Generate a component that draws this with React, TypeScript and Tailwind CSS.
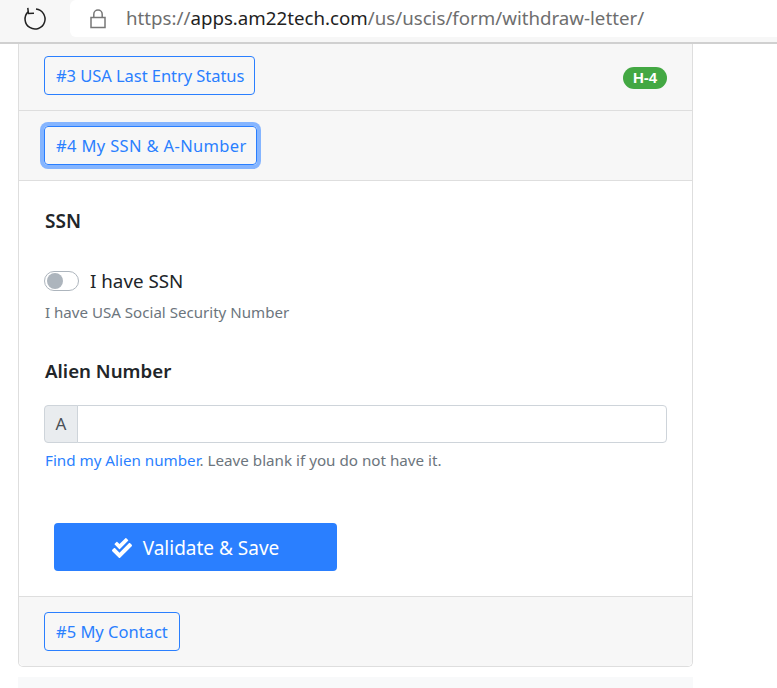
import React from "react";

const font = { fontFamily: '"Noto Sans", "Open Sans", Arial, sans-serif' };

function HeaderButton({ children, className }: { children: React.ReactNode; className: string }) {
  return (
    <button
      className={
        "h-[39px] pl-[11px] pt-[2px] text-left rounded-[4px] border border-[#2a7fff] text-[#2a7fff] text-[16.5px] bg-transparent whitespace-nowrap " +
        className
      }
    >
      {children}
    </button>
  );
}

export default function App() {
  return (
    <div className="w-[777px] h-[688px] overflow-hidden bg-white flex flex-col" style={font}>
      <div className="h-[44px] shrink-0 bg-[#f7f7f7] border-b-2 border-[#d0d0d0] flex items-start">
        <div className="w-[70px] h-[37px] flex items-center justify-center">
          <svg width="26" height="26" viewBox="0 0 26 26" fill="none" stroke="#222" strokeWidth="1.5">
            <path d="M14 3.05 A10 10 0 1 1 6 5.9" />
            <path d="M5.8 1.8 L6.4 7.4 L12 7.2" />
          </svg>
        </div>
        <div className="flex-1 h-[37px] bg-white rounded-l-[6px] flex items-center">
          <svg width="16" height="20" viewBox="0 0 16 20" fill="none" stroke="#777" strokeWidth="1.5" className="ml-[20px]">
            <rect x="1" y="8.5" width="14" height="10" />
            <path d="M3.8 8.5 V5.2 A4.2 4.2 0 0 1 12.2 5.2 V8.5" />
          </svg>
          <div className="ml-[20px] text-[18.7px] text-[#6e6e6e] whitespace-nowrap">
            https://<span className="text-[#222]">apps.am22tech.com</span>/us/uscis/form/withdraw-letter/
          </div>
        </div>
      </div>

      <div className="ml-[18px] w-[675px] shrink-0 border-x border-b border-[#dedede] rounded-b-[5px] bg-white">
        <div className="h-[67px] bg-[#f7f7f7] border-b border-[#dedede] pl-[25px] pr-[25px] pt-[12px] flex items-start justify-between">
          <HeaderButton className="w-[211px] tracking-[-0.05px]">#3 USA Last Entry Status</HeaderButton>
          <span
            className="mt-[11px] h-[22px] w-[44px] rounded-full bg-[#43a843] text-white text-[15px] font-bold flex items-center justify-center"
            style={{ fontFamily: '"Liberation Sans", Arial, sans-serif' }}
          >
            H-4
          </span>
        </div>
        <div className="h-[70px] bg-[#f7f7f7] border-b border-[#dedede] pl-[25px] pt-[15px]">
          <HeaderButton className="w-[213px] tracking-[0.35px] shadow-[0_0_0_4px_#85b5ff]">#4 My SSN &amp; A-Number</HeaderButton>
        </div>

        <div className="h-[416px] border-b border-[#dedede] pl-[25px] pr-[25px] pt-[27px]">
          <div className="ml-[1px] text-[19px] leading-[26px] font-semibold text-[#212529]">SSN</div>
          <div className="mt-[33px] flex items-center h-[28px]">
            <span className="w-[35px] h-[20px] rounded-full border border-[#adb5bd] bg-white flex items-center pl-[2px]">
              <span className="w-[16px] h-[16px] rounded-full bg-[#adb5bd]" />
            </span>
            <span className="ml-[11px] text-[18.8px] text-[#212529]">I have SSN</span>
          </div>
          <div className="ml-[1px] mt-[6px] text-[15.1px] leading-[22px] text-[#6c757d]">I have USA Social Security Number</div>
          <div className="ml-[1px] mt-[35px] text-[18.7px] leading-[26px] font-semibold text-[#212529]">Alien Number</div>
          <div className="mt-[21px] h-[38px] flex">
            <span className="w-[34px] bg-[#e9ecef] border border-[#ced4da] rounded-l-[4px] text-[#495057] text-[17px] flex items-center justify-center">
              A
            </span>
            <input className="flex-1 -ml-px border border-[#ced4da] rounded-r-[4px] bg-white outline-none" />
          </div>
          <div className="ml-[1px] mt-[6px] text-[15.2px] leading-[22px] text-[#6c757d]">
            <span className="text-[#2a7fff]">Find my Alien number</span>. Leave blank if you do not have it.
          </div>
          <button className="mt-[52px] ml-[10px] w-[283px] h-[48px] pt-[2px] rounded-[4px] bg-[#2a7fff] text-white text-[19px] flex items-center justify-center">
            <svg width="20" height="20" viewBox="0 0 512 512" fill="#fff" className="mr-[11px]">
              <path d="M505 174.8l-39.6-39.6c-9.4-9.4-24.6-9.4-33.9 0L192 374.7 80.6 263.2c-9.4-9.4-24.6-9.4-33.9 0L7 302.9c-9.4 9.4-9.4 24.6 0 34L175 505c9.4 9.4 24.6 9.4 33.9 0l296-296.2c9.4-9.5 9.4-24.7.1-34zm-324.3 106c6.2 6.3 16.4 6.3 22.6 0l208-208.2c6.2-6.3 6.2-16.4 0-22.6L366.1 4.7c-6.2-6.3-16.4-6.3-22.6 0L192 156.2l-55.4-55.5c-6.2-6.3-16.4-6.3-22.6 0L68.7 146c-6.2 6.3-6.2 16.4 0 22.6l112 112.2z" />
            </svg>
            Validate &amp; Save
          </button>
        </div>

        <div className="h-[69px] bg-[#f7f7f7] rounded-b-[5px] pl-[25px] pt-[15px]">
          <HeaderButton className="w-[136px]">#5 My Contact</HeaderButton>
        </div>
      </div>

      <div className="ml-[18px] mt-[10px] w-[675px] flex-1 bg-[#f8f9fa]" />
    </div>
  );
}
